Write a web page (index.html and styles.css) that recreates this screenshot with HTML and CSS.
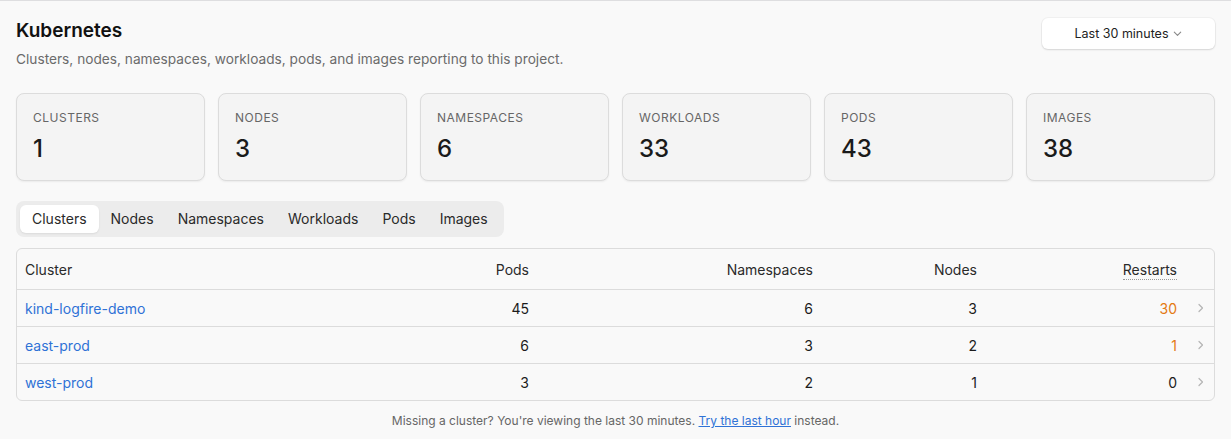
FILE: index.html
```html
<!DOCTYPE html>
<html lang="en">
<head>
    <meta charset="UTF-8">
    <title>Kubernetes</title>
    <link rel="stylesheet" href="styles.css">
</head>
<body>
    <div class="page">
        <div class="header">
            <div>
                <h1>Kubernetes</h1>
                <p class="subtitle">Clusters, nodes, namespaces, workloads, pods, and images reporting to this project.</p>
            </div>
            <button class="range">Last 30 minutes
                <svg width="11" height="11" viewBox="0 0 12 12"><path d="M2.5 4.5 6 8l3.5-3.5" fill="none" stroke="#888" stroke-width="1.2" stroke-linecap="round" stroke-linejoin="round"/></svg>
            </button>
        </div>

        <div class="stats">
            <div class="stat"><div class="stat-label">Clusters</div><div class="stat-value">1</div></div>
            <div class="stat"><div class="stat-label">Nodes</div><div class="stat-value">3</div></div>
            <div class="stat"><div class="stat-label">Namespaces</div><div class="stat-value">6</div></div>
            <div class="stat"><div class="stat-label">Workloads</div><div class="stat-value">33</div></div>
            <div class="stat"><div class="stat-label">Pods</div><div class="stat-value">43</div></div>
            <div class="stat"><div class="stat-label">Images</div><div class="stat-value">38</div></div>
        </div>

        <div class="tabs">
            <span class="tab active">Clusters</span>
            <span class="tab">Nodes</span>
            <span class="tab">Namespaces</span>
            <span class="tab">Workloads</span>
            <span class="tab">Pods</span>
            <span class="tab">Images</span>
        </div>

        <div class="table-wrap">
            <table>
                <colgroup>
                    <col style="width:260px"><col style="width:260px"><col style="width:284px"><col style="width:164px"><col style="width:200px"><col style="width:32px">
                </colgroup>
                <thead>
                    <tr>
                        <th class="left">Cluster</th>
                        <th>Pods</th>
                        <th>Namespaces</th>
                        <th>Nodes</th>
                        <th><span class="dotted">Restarts</span></th>
                        <th></th>
                    </tr>
                </thead>
                <tbody>
                    <tr>
                        <td class="left"><a href="#">kind-logfire-demo</a></td>
                        <td>45</td><td>6</td><td>3</td><td class="warn">30</td>
                        <td class="chev"><svg width="8" height="10" viewBox="0 0 8 10"><path d="M2 1.5 5.5 5 2 8.5" fill="none" stroke="#b5b5b5" stroke-width="1.2" stroke-linecap="round" stroke-linejoin="round"/></svg></td>
                    </tr>
                    <tr>
                        <td class="left"><a href="#">east-prod</a></td>
                        <td>6</td><td>3</td><td>2</td><td class="warn">1</td>
                        <td class="chev"><svg width="8" height="10" viewBox="0 0 8 10"><path d="M2 1.5 5.5 5 2 8.5" fill="none" stroke="#b5b5b5" stroke-width="1.2" stroke-linecap="round" stroke-linejoin="round"/></svg></td>
                    </tr>
                    <tr>
                        <td class="left"><a href="#">west-prod</a></td>
                        <td>3</td><td>2</td><td>1</td><td>0</td>
                        <td class="chev"><svg width="8" height="10" viewBox="0 0 8 10"><path d="M2 1.5 5.5 5 2 8.5" fill="none" stroke="#b5b5b5" stroke-width="1.2" stroke-linecap="round" stroke-linejoin="round"/></svg></td>
                    </tr>
                </tbody>
            </table>
        </div>

        <p class="footnote">Missing a cluster? You're viewing the last 30 minutes. <a href="#">Try the last hour</a> instead.</p>
    </div>
</body>
</html>
```

FILE: styles.css
```css
body {
    margin: 0;
    background-color: #f9f9f9;
    font-family: Inter, "Noto Sans", sans-serif;
    color: #1c1c1c;
    border-top: 1px solid #dedee0;
}

.page {
    padding: 14px 16px 0 16px;
}

.header {
    display: flex;
    justify-content: space-between;
    align-items: flex-start;
}

h1 {
    margin: 3px 0 0;
    font-size: 19px;
    font-weight: 600;
    line-height: 26px;
    color: #111;
}

.subtitle {
    margin: 5px 0 0;
    font-size: 13.7px;
    line-height: 20px;
    color: #6b6b6b;
}

.range {
    display: flex;
    align-items: center;
    justify-content: center;
    gap: 3px;
    width: 173px;
    height: 31px;
    margin-top: 3px;
    border: none;
    border-radius: 6px;
    background-color: #fff;
    box-shadow: 0 1px 2px rgba(0, 0, 0, 0.12), 0 0 0 1px rgba(0, 0, 0, 0.03);
    font-family: inherit;
    font-size: 12.5px;
    color: #222;
}

.stats {
    display: grid;
    grid-template-columns: repeat(6, 1fr);
    gap: 13px;
    margin-top: 24px;
}

.stat {
    height: 88px;
    box-sizing: border-box;
    padding: 16px 16px 0;
    background-color: #f4f4f4;
    border: 1px solid #dcdcdc;
    border-radius: 8px;
    box-shadow: 0 1px 2px rgba(0, 0, 0, 0.06);
}

.stat-label {
    font-size: 12px;
    line-height: 16px;
    letter-spacing: 0.5px;
    text-transform: uppercase;
    color: #666;
}

.stat-value {
    margin-top: 8px;
    font-size: 24px;
    line-height: 30px;
    font-weight: 500;
    color: #1a1a1a;
}

.tabs {
    display: flex;
    width: fit-content;
    margin-top: 20px;
    padding: 4px;
    background-color: #ececec;
    border-radius: 8px;
}

.tab {
    padding: 0 12px;
    height: 28px;
    line-height: 28px;
    font-size: 14px;
    color: #2a2a2a;
    border-radius: 6px;
}

.tab.active {
    background-color: #fff;
    box-shadow: 0 1px 2px rgba(0, 0, 0, 0.08);
}

.table-wrap {
    margin-top: 11px;
    border: 1px solid #dcdcdc;
    border-radius: 6px;
    overflow: hidden;
    background-color: #f9f9f9;
}

table {
    width: 100%;
    border-collapse: collapse;
    table-layout: fixed;
    font-size: 14px;
}

th {
    height: 40px;
    padding: 0 8px;
    text-align: right;
    font-weight: 400;
    color: #2a2a2a;
    border-bottom: 1px solid #dcdcdc;
}

td {
    height: 36px;
    padding: 0 8px;
    text-align: right;
    color: #1c1c1c;
    border-bottom: 1px solid #dcdcdc;
}

tbody tr:last-child td {
    border-bottom: none;
}

.left {
    text-align: left;
}

td a {
    color: #2f72d6;
    text-decoration: none;
}

.warn {
    color: #e47a12;
}

.chev {
    text-align: left;
    padding: 0 0 0 12px;
}

.chev svg {
    display: block;
}

.dotted {
    border-bottom: 1px dotted #999;
    padding-bottom: 1px;
}

.footnote {
    margin: 12px 0 0;
    text-align: center;
    font-size: 12px;
    color: #666;
}

.footnote a {
    color: #2f72d6;
}
```
